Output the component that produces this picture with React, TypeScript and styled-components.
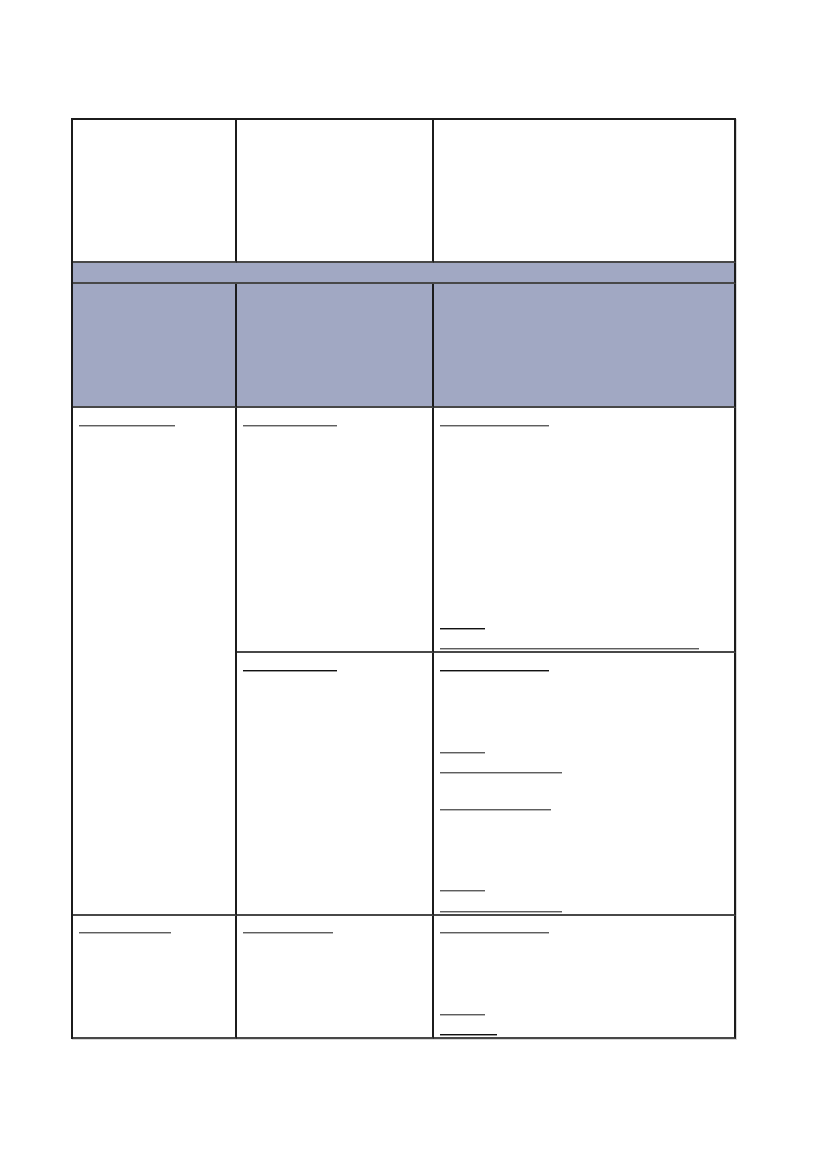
import React from 'react';
import styled, { createGlobalStyle } from 'styled-components';

type Rule = { at: number; w: number; dark?: boolean };

type CellSpec = {
    key: string;
    col: string;
    row: string;
    tone?: 'band' | 'plain';
    rules?: Rule[];
};

const cells: CellSpec[] = [
    { key: 'h1', col: '1', row: '1' },
    { key: 'h2', col: '2', row: '1' },
    { key: 'h3', col: '3', row: '1' },
    { key: 'band', col: '1 / span 3', row: '2', tone: 'band' },
    { key: 'g1', col: '1', row: '3', tone: 'band' },
    { key: 'g2', col: '2', row: '3', tone: 'band' },
    { key: 'g3', col: '3', row: '3', tone: 'band' },
    { key: 'a1', col: '1', row: '4 / span 2', rules: [{ at: 17, w: 96 }] },
    { key: 'a2', col: '2', row: '4', rules: [{ at: 17, w: 94 }] },
    {
        key: 'a3',
        col: '3',
        row: '4',
        rules: [
            { at: 17, w: 109 },
            { at: 220, w: 45, dark: true },
            { at: 240, w: 259 },
        ],
    },
    { key: 'b2', col: '2', row: '5', rules: [{ at: 17, w: 94, dark: true }] },
    {
        key: 'b3',
        col: '3',
        row: '5',
        rules: [
            { at: 17, w: 109, dark: true },
            { at: 99, w: 45 },
            { at: 119, w: 122 },
            { at: 156, w: 111 },
            { at: 237, w: 45 },
            { at: 258, w: 122 },
        ],
    },
    { key: 'c1', col: '1', row: '6', rules: [{ at: 16, w: 92 }] },
    { key: 'c2', col: '2', row: '6', rules: [{ at: 16, w: 90 }] },
    {
        key: 'c3',
        col: '3',
        row: '6',
        rules: [
            { at: 16, w: 109 },
            { at: 98, w: 45 },
            { at: 118, w: 57, dark: true },
        ],
    },
];

const RULE_HEIGHT = 2;

export default function App() {
    return (
        <>
            <GlobalStyle />
            <StyledPage>
                <StyledTable>
                    {cells.map((cell) => {
                        let prev = 0;
                        return (
                            <StyledCell
                                key={cell.key}
                                $col={cell.col}
                                $row={cell.row}
                                $tone={cell.tone ?? 'plain'}
                            >
                                {cell.rules?.map((rule, i) => {
                                    const gap = rule.at - prev;
                                    prev = rule.at + RULE_HEIGHT;
                                    return (
                                        <StyledRule
                                            key={i}
                                            $gap={gap}
                                            $width={rule.w}
                                            $dark={!!rule.dark}
                                        />
                                    );
                                })}
                            </StyledCell>
                        );
                    })}
                </StyledTable>
            </StyledPage>
        </>
    );
}

const GlobalStyle = createGlobalStyle`
    html, body {
        margin: 0;
        padding: 0;
        background: #ffffff;
        font-family: "Liberation Sans", Arial, sans-serif;
    }
`;

const StyledPage = styled.div`
    width: 827px;
    min-height: 1169px;
    padding: 118px 0 0 71px;
    box-sizing: border-box;
`;

const StyledTable = styled.div`
    display: grid;
    grid-template-columns: 164px 197px 302px;
    grid-template-rows: 143px 21px 124px 245px 263px 123px;
    width: fit-content;
    border-top: 2px solid #1c1c1c;
    border-left: 2px solid #1c1c1c;
    box-shadow: 1px 1px 0 #d6d6d6;
`;

const StyledCell = styled.div<{ $col: string; $row: string; $tone: 'band' | 'plain' }>`
    grid-column: ${(p) => p.$col};
    grid-row: ${(p) => p.$row};
    display: flex;
    flex-direction: column;
    align-items: flex-start;
    padding: 0 0 0 6px;
    box-sizing: border-box;
    background: ${(p) => (p.$tone === 'band' ? '#a1a8c3' : '#ffffff')};
    border-right: 2px solid #1c1c1c;
    border-bottom: 2px solid #484848;
`;

const StyledRule = styled.div<{ $gap: number; $width: number; $dark: boolean }>`
    margin-top: ${(p) => p.$gap}px;
    width: ${(p) => p.$width}px;
    height: 1px;
    flex-shrink: 0;
    background: ${(p) => (p.$dark ? '#111111' : '#5e5e5e')};
    box-shadow: 0 1px 0 ${(p) => (p.$dark ? '#9a9a9a' : '#b8b8b8')};
    margin-bottom: 1px;
`;
